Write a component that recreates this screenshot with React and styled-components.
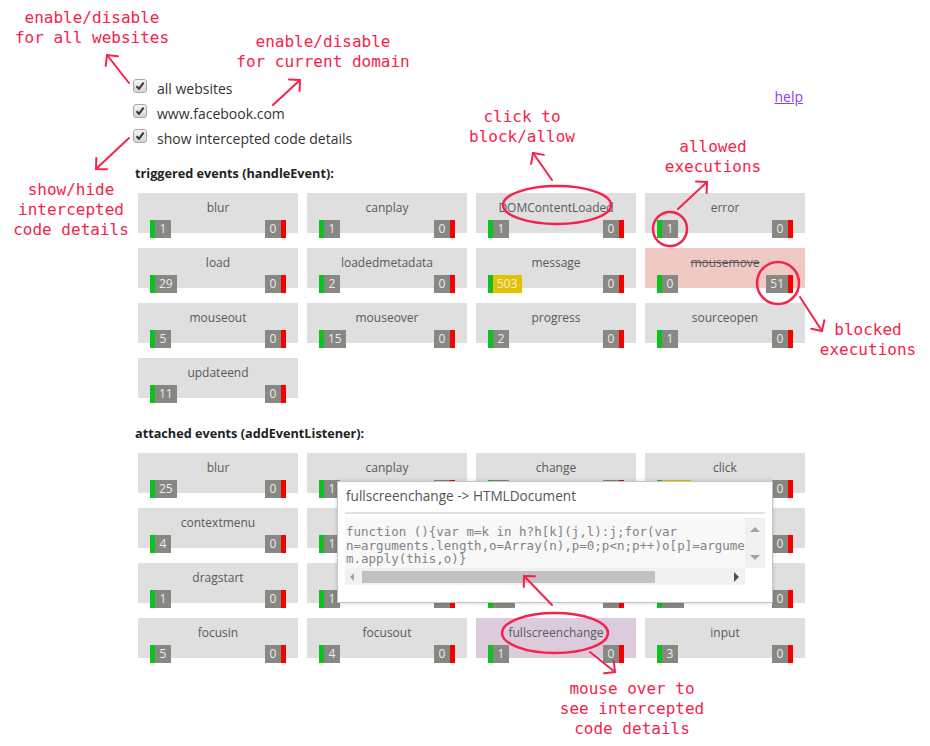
import React from "react";
import styled, { createGlobalStyle } from "styled-components";

const GlobalStyle = createGlobalStyle`
  body {
    margin: 0;
    background: #fff;
    font-family: "Open Sans", "DejaVu Sans", sans-serif;
  }
`;

const RED = "#f5234b";

const Page = styled.div`
  position: relative;
  width: 930px;
  height: 746px;
  box-sizing: border-box;
  padding: 76px 0 0 133px;
  overflow: hidden;
`;

const TopBar = styled.div`
  display: flex;
  justify-content: space-between;
  align-items: flex-start;
  width: 670px;
`;

const Options = styled.div`
  display: flex;
  flex-direction: column;
`;

const OptionRow = styled.label`
  display: flex;
  align-items: center;
  height: 25px;
  font-size: 14px;
  color: #333;
`;

const CheckBox = styled.span`
  width: 14px;
  height: 14px;
  box-sizing: border-box;
  border: 1px solid #a9a9a9;
  border-radius: 3px;
  background: linear-gradient(#f4f4f4, #d4d4d4);
  display: flex;
  align-items: center;
  justify-content: center;
  margin: -6px 10px 0 0;
`;

const HelpLink = styled.a`
  margin-top: 13px;
  font-size: 14px;
  line-height: 16px;
  color: #8c3cf6;
  text-decoration: underline;
`;

const SectionTitle = styled.div`
  margin: ${(p) => p.$gap}px 0 12px 2px;
  font-size: 12.7px;
  font-weight: 700;
  line-height: 16px;
  color: #222;
`;

const Grid = styled.div`
  position: relative;
  display: grid;
  grid-template-columns: repeat(4, 160px);
  column-gap: 9px;
  row-gap: 15px;
  margin-left: 5px;
`;

const tileBg = { normal: "#dfdfdf", blocked: "#f0c9c5", hover: "#dccbdc" };

const Tile = styled.div`
  height: 40px;
  background: ${(p) => tileBg[p.$state]};
  display: flex;
  flex-direction: column;
`;

const TileName = styled.div`
  margin-top: 7px;
  line-height: 16px;
  font-size: 12px;
  color: #595959;
  text-align: center;
  text-decoration: ${(p) => (p.$struck ? "line-through" : "none")};
`;

const Counters = styled.div`
  display: flex;
  justify-content: space-between;
  margin-top: 4px;
  padding: 0 12px;
`;

const Count = styled.span`
  height: 18px;
  line-height: 18px;
  font-size: 12px;
  color: #ececec;
  padding: 0 4px;
  min-width: 8px;
  text-align: center;
  background: ${(p) => (p.$hot ? "#e3c300" : "#878881")};
  border-left: ${(p) => (p.$kind === "ok" ? "5px solid #0bc21f" : "none")};
  border-right: ${(p) => (p.$kind === "block" ? "5px solid #f60000" : "none")};
`;

/* popup with intercepted code */
const Popup = styled.div`
  position: absolute;
  left: 199px;
  top: 28px;
  width: 436px;
  box-sizing: border-box;
  padding: 6px 7px 17px;
  background: #fff;
  border: 1px solid #c4c4c4;
  box-shadow: 0 0 4px rgba(0, 0, 0, 0.18);
  z-index: 2;
`;

const PopupTitle = styled.div`
  padding-left: 1px;
  font-size: 13.6px;
  line-height: 16px;
  color: #555;
`;

const Rule = styled.div`
  height: 2px;
  margin-top: 8px;
  background: #e2e2e2;
`;

const CodeBox = styled.div`
  margin-top: 4px;
  display: grid;
  grid-template-columns: 400px 20px;
  grid-template-rows: 50px 17px;
`;

const Code = styled.pre`
  margin: 0;
  padding: 7px 0 0 1px;
  overflow: hidden;
  background: #f8f8f8;
  font-family: "DejaVu Sans Mono", monospace;
  font-size: 12.5px;
  line-height: 13.5px;
  color: #838383;
`;

const VTrack = styled.div`
  background: #f1f1f1;
  display: flex;
  flex-direction: column;
  justify-content: space-between;
  align-items: center;
  padding: 9px 0 8px;
  box-sizing: border-box;
`;

const HTrack = styled.div`
  background: #f1f1f1;
  display: flex;
  align-items: center;
  padding: 0 6px 0 5px;
  gap: 8px;
`;

const Thumb = styled.div`
  width: 293px;
  height: 12px;
  background: #c1c1c1;
`;

const Spacer = styled.div`
  flex: 1;
`;

const Tri = styled.span`
  width: 0;
  height: 0;
  border: 5px solid transparent;
  ${(p) =>
    p.$dir === "up"
      ? `border-bottom-color: #a3a3a3; border-top-width: 0;`
      : p.$dir === "down"
      ? `border-top-color: #a3a3a3; border-bottom-width: 0;`
      : p.$dir === "left"
      ? `border-right-color: #a3a3a3; border-left-width: 0; border-width: 4px 4px 4px 0;`
      : `border-left-color: #505050; border-right-width: 0; border-width: 5px 0 5px 5px;`}
`;

/* annotation callouts drawn over the screenshot */
const Note = styled.div`
  position: absolute;
  left: ${(p) => p.$x}px;
  top: ${(p) => p.$y}px;
  transform: translateX(-50%);
  white-space: pre;
  text-align: center;
  font-family: "DejaVu Sans Mono", monospace;
  font-size: 16px;
  line-height: 20px;
  color: ${RED};
  z-index: 4;
`;

const Overlay = styled.svg`
  position: absolute;
  left: 0;
  top: 0;
  pointer-events: none;
  z-index: 3;
`;

const triggered = [
  { name: "blur", ok: 1, no: 0 },
  { name: "canplay", ok: 1, no: 0 },
  { name: "DOMContentLoaded", ok: 1, no: 0 },
  { name: "error", ok: 1, no: 0 },
  { name: "load", ok: 29, no: 0 },
  { name: "loadedmetadata", ok: 2, no: 0 },
  { name: "message", ok: 503, no: 0, hot: true },
  { name: "mousemove", ok: 0, no: 51, state: "blocked" },
  { name: "mouseout", ok: 5, no: 0 },
  { name: "mouseover", ok: 15, no: 0 },
  { name: "progress", ok: 2, no: 0 },
  { name: "sourceopen", ok: 1, no: 0 },
  { name: "updateend", ok: 11, no: 0 },
];

const attached = [
  { name: "blur", ok: 25, no: 0 },
  { name: "canplay", ok: 1, no: 0 },
  { name: "change", ok: 1, no: 0 },
  { name: "click", ok: 128, no: 0, hot: true },
  { name: "contextmenu", ok: 4, no: 0 },
  { name: "copy", ok: 1, no: 0 },
  { name: "cut", ok: 1, no: 0 },
  { name: "dblclick", ok: 1, no: 0 },
  { name: "dragstart", ok: 1, no: 0 },
  { name: "drop", ok: 1, no: 0 },
  { name: "error", ok: 12, no: 0 },
  { name: "focus", ok: 14, no: 0 },
  { name: "focusin", ok: 5, no: 0 },
  { name: "focusout", ok: 4, no: 0 },
  { name: "fullscreenchange", ok: 1, no: 0, state: "hover" },
  { name: "input", ok: 3, no: 0 },
];

const code = `function (){var m=k in h?h[k](j,l):j;for(var
n=arguments.length,o=Array(n),p=0;p<n;p++)o[p]=arguments[p];return
m.apply(this,o)}`;

function Check() {
  return (
    <svg width="10" height="10" viewBox="0 0 10 10">
      <path d="M1.5 5.2 L4 7.8 L8.6 1.6" fill="none" stroke="#333" strokeWidth="2" />
    </svg>
  );
}

function EventTile({ ev }) {
  const state = ev.state || "normal";
  return (
    <Tile $state={state}>
      <TileName $struck={state === "blocked"}>{ev.name}</TileName>
      <Counters>
        <Count $kind="ok" $hot={ev.hot}>{ev.ok}</Count>
        <Count $kind="block">{ev.no}</Count>
      </Counters>
    </Tile>
  );
}

function Arrow({ from, to }) {
  const dx = from[0] - to[0];
  const dy = from[1] - to[1];
  const len = Math.hypot(dx, dy);
  const ux = dx / len;
  const uy = dy / len;
  const arm = 11;
  const rot = (a) => [
    to[0] + arm * (ux * Math.cos(a) - uy * Math.sin(a)),
    to[1] + arm * (ux * Math.sin(a) + uy * Math.cos(a)),
  ];
  const a = rot(Math.PI / 4);
  const b = rot(-Math.PI / 4);
  return (
    <g stroke={RED} strokeWidth="2" fill="none" strokeLinecap="round">
      <line x1={from[0]} y1={from[1]} x2={to[0]} y2={to[1]} />
      <polyline points={`${a[0]},${a[1]} ${to[0]},${to[1]} ${b[0]},${b[1]}`} />
    </g>
  );
}

export default function App() {
  return (
    <Page>
      <GlobalStyle />
      <TopBar>
        <Options>
          <OptionRow>
            <CheckBox><Check /></CheckBox>all websites
          </OptionRow>
          <OptionRow>
            <CheckBox><Check /></CheckBox>www.facebook.com
          </OptionRow>
          <OptionRow>
            <CheckBox><Check /></CheckBox>show intercepted code details
          </OptionRow>
        </Options>
        <HelpLink href="#help">help</HelpLink>
      </TopBar>

      <SectionTitle $gap={14}>triggered events (handleEvent):</SectionTitle>
      <Grid>
        {triggered.map((ev) => (
          <EventTile key={ev.name} ev={ev} />
        ))}
      </Grid>

      <SectionTitle $gap={27}>attached events (addEventListener):</SectionTitle>
      <Grid>
        {attached.map((ev) => (
          <EventTile key={ev.name} ev={ev} />
        ))}
        <Popup>
          <PopupTitle>fullscreenchange -&gt; HTMLDocument</PopupTitle>
          <Rule />
          <CodeBox>
            <Code>{code}</Code>
            <VTrack>
              <Tri $dir="up" />
              <Tri $dir="down" />
            </VTrack>
            <HTrack>
              <Tri $dir="left" />
              <Thumb />
              <Spacer />
              <Tri $dir="right" />
            </HTrack>
          </CodeBox>
        </Popup>
      </Grid>

      <Note $x={92} $y={8}>{"enable/disable\nfor all websites"}</Note>
      <Note $x={323} $y={32}>{"enable/disable\nfor current domain"}</Note>
      <Note $x={71} $y={180}>{"show/hide\nintercepted\ncode details"}</Note>
      <Note $x={522} $y={107}>{"click to\nblock/allow"}</Note>
      <Note $x={713} $y={137}>{"allowed\nexecutions"}</Note>
      <Note $x={868} $y={320}>{"blocked\nexecutions"}</Note>
      <Note $x={632} $y={679}>{"mouse over to\nsee intercepted\ncode details"}</Note>

      <Overlay width="930" height="746">
        <g stroke={RED} strokeWidth="2.5" fill="none">
          <ellipse cx="557" cy="205" rx="54" ry="19" />
          <circle cx="670" cy="229" r="17" />
          <circle cx="778" cy="283" r="21" />
          <ellipse cx="555" cy="633" rx="53" ry="20" />
        </g>
        <Arrow from={[129, 83]} to={[107, 55]} />
        <Arrow from={[273, 105]} to={[300, 80]} />
        <Arrow from={[129, 138]} to={[96, 169]} />
        <Arrow from={[552, 180]} to={[533, 153]} />
        <Arrow from={[678, 209]} to={[707, 182]} />
        <Arrow from={[800, 297]} to={[822, 331]} />
        <Arrow from={[552, 605]} to={[524, 576]} />
        <Arrow from={[590, 652]} to={[615, 672]} />
      </Overlay>
    </Page>
  );
}
